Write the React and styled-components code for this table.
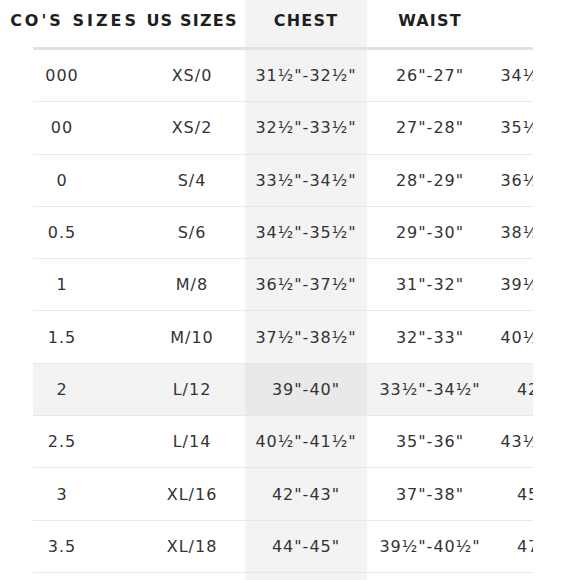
import styled, { createGlobalStyle } from "styled-components";

const GlobalStyle = createGlobalStyle`
  html, body {
    margin: 0;
    padding: 0;
    background: #ffffff;
    overflow: hidden;
  }
`;

const Frame = styled.div`
  width: 533px;
  height: 580px;
  overflow: hidden;
  font-family: "DejaVu Sans", "Open Sans", sans-serif;
`;

const Table = styled.div`
  margin-left: 33px;
  display: grid;
  grid-template-columns: 90px 122px 122px 122px 122px;
`;

const Row = styled.div`
  display: contents;
`;

const Cell = styled.div`
  box-sizing: border-box;
  height: ${(p) => (p.$filler ? "20px" : p.$head ? "50px" : "52.3px")};
  display: flex;
  align-items: center;
  justify-content: ${(p) => p.$justify || "center"};
  white-space: nowrap;
  padding-left: ${(p) => p.$pl || 0}px;
  padding-right: ${(p) => p.$pr || 0}px;
  padding-bottom: ${(p) => (p.$head ? "6px" : "0")};
  border-bottom: ${(p) =>
    p.$filler ? "none" : p.$head ? "3px solid #e2e2e2" : "1px solid #e8e8e8"};
  background: ${(p) =>
    p.$shade && p.$hl ? "#e9e9e9" : p.$shade || p.$hl ? "#f3f3f3" : "transparent"};
  color: ${(p) => (p.$head ? "#1e1e1e" : "#333333")};
  font-size: 16px;
  font-weight: ${(p) => (p.$head ? 700 : 400)};
  letter-spacing: ${(p) => (p.$head ? "1.2px" : "1px")};
`;

// first header is cut off by the left edge in the screenshot
const Overhang = styled.span`
  margin-right: -16px;
  letter-spacing: 3px;
`;

const rows = [
  ["000", "XS/0", "31½\"-32½\"", "26\"-27\"", "34½\"-35½\""],
  ["00", "XS/2", "32½\"-33½\"", "27\"-28\"", "35½\"-36½\""],
  ["0", "S/4", "33½\"-34½\"", "28\"-29\"", "36½\"-37½\""],
  ["0.5", "S/6", "34½\"-35½\"", "29\"-30\"", "38½\"-39½\""],
  ["1", "M/8", "36½\"-37½\"", "31\"-32\"", "39½\"-40½\""],
  ["1.5", "M/10", "37½\"-38½\"", "32\"-33\"", "40½\"-41½\""],
  ["2", "L/12", "39\"-40\"", "33½\"-34½\"", "42\"-43\""],
  ["2.5", "L/14", "40½\"-41½\"", "35\"-36\"", "43½\"-44½\""],
  ["3", "XL/16", "42\"-43\"", "37\"-38\"", "45\"-46\""],
  ["3.5", "XL/18", "44\"-45\"", "39½\"-40½\"", "47\"-48\""],
];

// horizontal nudges so text centres line up with the screenshot
const pads = [{ $pr: 32 }, { $pl: 16 }, {}, { $pl: 4 }, { $pl: 2 }];

export default function App() {
  return (
    <Frame>
      <GlobalStyle />
      <Table>
        <Row>
          <Cell $head $justify="flex-end">
            <Overhang>CO'S SIZES</Overhang>
          </Cell>
          <Cell $head {...pads[1]}>US SIZES</Cell>
          <Cell $head $shade>CHEST</Cell>
          <Cell $head {...pads[3]}>WAIST</Cell>
          <Cell $head />
        </Row>
        {rows.map((r, i) => {
          const hl = r[0] === "2";
          return (
            <Row key={i}>
              {r.map((v, j) => (
                <Cell key={j} {...pads[j]} $shade={j === 2} $hl={hl}>
                  {v}
                </Cell>
              ))}
            </Row>
          );
        })}
        <Row>
          <Cell $filler />
          <Cell $filler />
          <Cell $filler $shade />
          <Cell $filler />
          <Cell $filler />
        </Row>
      </Table>
    </Frame>
  );
}
